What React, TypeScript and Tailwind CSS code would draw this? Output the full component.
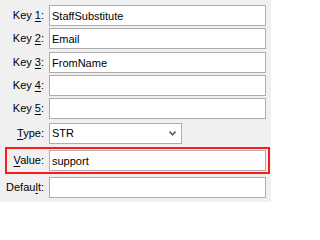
import React from "react";

interface LabelProps {
  pre: string;
  u: string;
  post: string;
  width?: string;
}

function Label({ pre, u, post, width = "w-[39px]" }: LabelProps) {
  return (
    <span className={`${width} shrink-0 text-right whitespace-nowrap`}>
      {pre}
      <span className="underline underline-offset-[2px]">{u}</span>
      {post}
    </span>
  );
}

function Field({ value }: { value: string }) {
  return (
    <input
      readOnly
      value={value}
      className="ml-[5px] h-[21px] min-w-0 flex-1 border border-[#adadad] bg-white px-[2px] text-[11px] text-black outline-none"
    />
  );
}

interface RowProps {
  pre: string;
  u: string;
  post: string;
  value?: string;
  className?: string;
}

function Row({ pre, u, post, value = "", className = "" }: RowProps) {
  return (
    <div className={`flex items-center pr-[4px] ${className}`}>
      <Label pre={pre} u={u} post={post} />
      <Field value={value} />
    </div>
  );
}

export default function App() {
  return (
    <div className="flex h-[202px] w-[271px] flex-col bg-[#f0f0f0] pl-[5px] pr-[1px] pt-[5px] font-['Liberation_Sans',Arial,sans-serif] text-[11px] text-black">
      <Row pre="Key " u="1" post=":" value="StaffSubstitute" />
      <Row pre="Key " u="2" post=":" value="Email" className="mt-[2px]" />
      <Row pre="Key " u="3" post=":" value="FromName" className="mt-[3px]" />
      <Row pre="Key " u="4" post=":" className="mt-[2px]" />
      <Row pre="Key " u="5" post=":" className="mt-[2px]" />

      {/* Type dropdown */}
      <div className="mt-[4px] flex items-center">
        <Label pre="" u="T" post="ype:" />
        <div className="ml-[5px] flex h-[21px] w-[133px] items-center justify-between border border-[#adadad] bg-white pl-[2px] pr-[5px]">
          <span>STR</span>
          <svg width="7" height="5" viewBox="0 0 7 5">
            <polyline points="0.5,0.5 3.5,3.8 6.5,0.5" fill="none" stroke="#606060" strokeWidth="1.6" />
          </svg>
        </div>
      </div>

      {/* Highlighted value row */}
      <div className="mt-[3px] flex h-[27px] items-center border-2 border-[#ff1a1a] pr-[2px]">
        <Label pre="" u="V" post="alue:" width="w-[37px]" />
        <Field value="support" />
      </div>

      <Row pre="Defau" u="l" post="t:" className="mt-[3px]" />
    </div>
  );
}
